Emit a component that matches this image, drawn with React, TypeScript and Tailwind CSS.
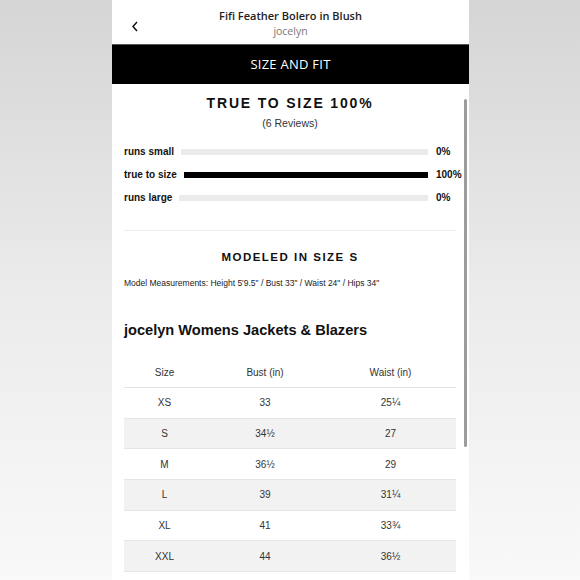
import React from 'react';

const fit = [
  { label: 'runs small', pct: 0 },
  { label: 'true to size', pct: 100 },
  { label: 'runs large', pct: 0 },
];

const sizes = [
  { size: 'XS', bust: '33', waist: '25¼' },
  { size: 'S', bust: '34½', waist: '27' },
  { size: 'M', bust: '36½', waist: '29' },
  { size: 'L', bust: '39', waist: '31¼' },
  { size: 'XL', bust: '41', waist: '33¾' },
  { size: 'XXL', bust: '44', waist: '36½' },
];

const App: React.FC = () => {
  return (
    <div className="w-[580px] h-[580px] overflow-hidden bg-linear-to-b from-[#d5d5d5] via-[#ebebeb] to-[#f9f9f9] pl-[112px]">
      <div className="w-[357px] h-full bg-white relative font-['Liberation_Sans',Arial,sans-serif] text-[#111]">
        {/* Header */}
        <div className="h-[44px] relative flex flex-col items-center pt-[9px] font-['Open_Sans',sans-serif]">
          <svg
            className="absolute left-[19px] top-[21px]"
            width="8"
            height="11"
            viewBox="0 0 8 11"
            fill="none"
          >
            <path d="M6 1 L2 5.5 L6 10" stroke="#111" strokeWidth="1.5" />
          </svg>
          <div className="text-[11px] leading-[14px] font-semibold text-[#222]">
            Fifi Feather Bolero in Blush
          </div>
          <div className="text-[10.5px] leading-[14px] mt-[1px] text-[#777]">jocelyn</div>
        </div>

        {/* Title bar */}
        <div className="h-[40px] bg-black border-t border-[#555] flex items-center justify-center text-white text-[13px] font-['Open_Sans',sans-serif] font-medium tracking-[0.02em]">
          SIZE AND FIT
        </div>

        <div className="pl-[12px] pr-[13px]">
          <div className="pt-[11px] text-center text-[14px] leading-[16px] font-bold tracking-[0.13em]">
            TRUE TO SIZE 100%
          </div>
          <div className="mt-[5px] text-center text-[10.5px] leading-[14px] text-[#333]">(6 Reviews)</div>

          <div className="mt-[10px] w-[340px]">
            {fit.map((f) => (
              <div key={f.label} className="h-[23px] flex items-center">
                <span className="text-[10px] font-bold mr-[7px] whitespace-nowrap">{f.label}</span>
                <div className="flex-1 h-[6px] bg-[#ebebeb]">
                  <div className="h-full bg-black" style={{ width: `${f.pct}%` }} />
                </div>
                <span className="w-[28px] ml-[8px] text-[10px] font-bold">{f.pct}%</span>
              </div>
            ))}
          </div>

          <div className="mt-[21px] border-t border-[#eeeeee]" />

          <div className="mt-[19px] text-center text-[11.5px] leading-[14px] font-bold tracking-[0.13em]">
            MODELED IN SIZE S
          </div>
          <div className="mt-[14px] text-[8.5px] leading-[10px] text-[#222]">
            Model Measurements: Height 5'9.5" / Bust 33" / Waist 24" / Hips 34"
          </div>

          <div className="mt-[33px] text-[14.6px] leading-[18px] font-bold">
            jocelyn Womens Jackets &amp; Blazers
          </div>

          <div className="mt-[19px] text-[10px] text-[#333]">
            <div className="grid grid-cols-[81px_120px_1fr] h-[30px] items-center text-center border-b border-[#e2e2e2]">
              <span>Size</span>
              <span>Bust (in)</span>
              <span>Waist (in)</span>
            </div>
            {sizes.map((s, i) => (
              <div
                key={s.size}
                className={
                  'grid grid-cols-[81px_120px_1fr] h-[30.7px] items-center text-center border-b border-[#e6e6e6] ' +
                  (i % 2 === 1 ? 'bg-[#f2f2f2]' : 'bg-white')
                }
              >
                <span>{s.size}</span>
                <span>{s.bust}</span>
                <span>{s.waist}</span>
              </div>
            ))}
          </div>
        </div>

        {/* Scrollbar */}
        <div className="absolute left-[352px] top-[99px] w-[3px] h-[348px] rounded-full bg-[#9c9c9c]" />
      </div>
    </div>
  );
};

export default App;
